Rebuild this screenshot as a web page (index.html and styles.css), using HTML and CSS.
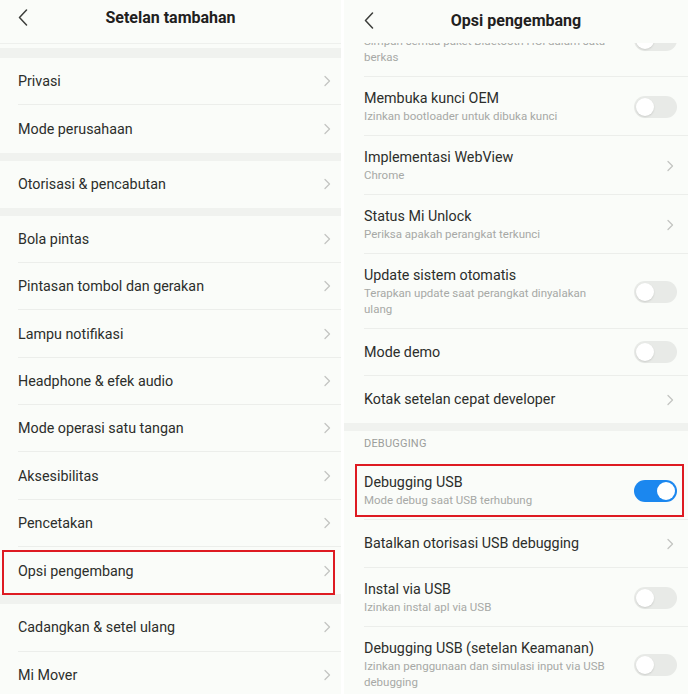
FILE: index.html
```html
<!DOCTYPE html>
<html lang="id">
<head>
<meta charset="utf-8">
<title>Opsi pengembang</title>
<link rel="stylesheet" href="styles.css">
</head>
<body>
<div class="screen">
  <section class="panel panel-left">
    <header class="bar bar-left">
      <svg class="back" viewBox="0 0 10 17" width="10" height="17"><path d="M8.5 1 L1.5 8.5 L8.5 16"/></svg>
      <h1 class="bar-title">Setelan tambahan</h1>
      <span></span>
    </header>
    <div class="band band-top"></div>
    <div class="group">
      <div class="item"><span class="label">Privasi</span><svg class="chev" viewBox="0 0 8 12" width="8" height="12"><path d="M2 1.5 L6.5 6 L2 10.5"/></svg></div>
      <div class="item"><span class="label">Mode perusahaan</span><svg class="chev" viewBox="0 0 8 12" width="8" height="12"><path d="M2 1.5 L6.5 6 L2 10.5"/></svg></div>
    </div>
    <div class="band"></div>
    <div class="group">
      <div class="item"><span class="label">Otorisasi &amp; pencabutan</span><svg class="chev" viewBox="0 0 8 12" width="8" height="12"><path d="M2 1.5 L6.5 6 L2 10.5"/></svg></div>
    </div>
    <div class="band"></div>
    <div class="group">
      <div class="item"><span class="label">Bola pintas</span><svg class="chev" viewBox="0 0 8 12" width="8" height="12"><path d="M2 1.5 L6.5 6 L2 10.5"/></svg></div>
      <div class="item"><span class="label">Pintasan tombol dan gerakan</span><svg class="chev" viewBox="0 0 8 12" width="8" height="12"><path d="M2 1.5 L6.5 6 L2 10.5"/></svg></div>
      <div class="item"><span class="label">Lampu notifikasi</span><svg class="chev" viewBox="0 0 8 12" width="8" height="12"><path d="M2 1.5 L6.5 6 L2 10.5"/></svg></div>
      <div class="item"><span class="label">Headphone &amp; efek audio</span><svg class="chev" viewBox="0 0 8 12" width="8" height="12"><path d="M2 1.5 L6.5 6 L2 10.5"/></svg></div>
      <div class="item"><span class="label">Mode operasi satu tangan</span><svg class="chev" viewBox="0 0 8 12" width="8" height="12"><path d="M2 1.5 L6.5 6 L2 10.5"/></svg></div>
      <div class="item"><span class="label">Aksesibilitas</span><svg class="chev" viewBox="0 0 8 12" width="8" height="12"><path d="M2 1.5 L6.5 6 L2 10.5"/></svg></div>
      <div class="item"><span class="label">Pencetakan</span><svg class="chev" viewBox="0 0 8 12" width="8" height="12"><path d="M2 1.5 L6.5 6 L2 10.5"/></svg></div>
      <div class="item item-marked-left"><span class="label">Opsi pengembang</span><svg class="chev" viewBox="0 0 8 12" width="8" height="12"><path d="M2 1.5 L6.5 6 L2 10.5"/></svg><span class="mark"></span></div>
    </div>
    <div class="band band-wide"></div>
    <div class="group">
      <div class="item"><span class="label">Cadangkan &amp; setel ulang</span><svg class="chev" viewBox="0 0 8 12" width="8" height="12"><path d="M2 1.5 L6.5 6 L2 10.5"/></svg></div>
      <div class="item"><span class="label">Mi Mover</span><svg class="chev" viewBox="0 0 8 12" width="8" height="12"><path d="M2 1.5 L6.5 6 L2 10.5"/></svg></div>
    </div>
  </section>

  <section class="panel panel-right">
    <header class="bar bar-right">
      <svg class="back" viewBox="0 0 10 17" width="10" height="17"><path d="M8.5 1 L1.5 8.5 L8.5 16"/></svg>
      <h1 class="bar-title">Opsi pengembang</h1>
      <span></span>
    </header>
    <div class="scroll">
      <div class="group">
        <div class="row row-partial">
          <div class="text"><div class="title-spacer"></div><div class="sub sub-wrap">Simpan semua paket Bluetooth HCI dalam satu berkas</div></div>
          <span class="toggle"></span>
        </div>
        <div class="row">
          <div class="text"><div class="title">Membuka kunci OEM</div><div class="sub">Izinkan bootloader untuk dibuka kunci</div></div>
          <span class="toggle"></span>
        </div>
        <div class="row">
          <div class="text"><div class="title">Implementasi WebView</div><div class="sub">Chrome</div></div>
          <svg class="chev" viewBox="0 0 8 12" width="8" height="12"><path d="M2 1.5 L6.5 6 L2 10.5"/></svg>
        </div>
        <div class="row">
          <div class="text"><div class="title">Status Mi Unlock</div><div class="sub">Periksa apakah perangkat terkunci</div></div>
          <svg class="chev" viewBox="0 0 8 12" width="8" height="12"><path d="M2 1.5 L6.5 6 L2 10.5"/></svg>
        </div>
        <div class="row">
          <div class="text"><div class="title">Update sistem otomatis</div><div class="sub sub-wrap">Terapkan update saat perangkat dinyalakan ulang</div></div>
          <span class="toggle"></span>
        </div>
        <div class="row row-single">
          <div class="text"><div class="title">Mode demo</div></div>
          <span class="toggle"></span>
        </div>
        <div class="row row-single">
          <div class="text"><div class="title">Kotak setelan cepat developer</div></div>
          <svg class="chev" viewBox="0 0 8 12" width="8" height="12"><path d="M2 1.5 L6.5 6 L2 10.5"/></svg>
        </div>
      </div>
      <div class="band"></div>
      <div class="group">
        <div class="section-label">DEBUGGING</div>
        <div class="row row-marked">
          <div class="text"><div class="title">Debugging USB</div><div class="sub">Mode debug saat USB terhubung</div></div>
          <span class="toggle toggle-on"></span>
          <span class="mark mark-right"></span>
        </div>
        <div class="row row-single row-tall">
          <div class="text"><div class="title">Batalkan otorisasi USB debugging</div></div>
          <svg class="chev" viewBox="0 0 8 12" width="8" height="12"><path d="M2 1.5 L6.5 6 L2 10.5"/></svg>
        </div>
        <div class="row">
          <div class="text"><div class="title">Instal via USB</div><div class="sub">Izinkan instal apl via USB</div></div>
          <span class="toggle"></span>
        </div>
        <div class="row">
          <div class="text"><div class="title">Debugging USB (setelan Keamanan)</div><div class="sub sub-wrap">Izinkan penggunaan dan simulasi input via USB debugging</div></div>
          <span class="toggle"></span>
        </div>
      </div>
    </div>
  </section>
</div>
</body>
</html>
```

FILE: styles.css
```css
* { box-sizing: border-box; }

html, body {
  margin: 0;
  padding: 0;
  background: #ffffff;
}

body {
  font-family: Roboto, "Noto Sans", "Liberation Sans", sans-serif;
  color: #2c2e2b;
}

.screen {
  display: flex;
  gap: 3px;
  width: 688px;
  height: 694px;
  overflow: hidden;
}

.panel {
  background: #fafcf9;
  display: flex;
  flex-direction: column;
  overflow: hidden;
}

.panel-left { width: 341px; flex: none; }
.panel-right { flex: 1; }

/* header bar */
.bar {
  display: grid;
  grid-template-columns: 1fr auto 1fr;
  align-items: center;
  background: #fafcf9;
  flex: none;
}

.bar-left {
  height: 44px;
  padding: 0 18px 8px 18px;
  border-bottom: 1px solid #eef0ed;
}

.bar-right {
  height: 43px;
  padding: 0 20px 3px 20px;
}

.back {
  fill: none;
  stroke: #3c3e3b;
  stroke-width: 1.5;
  stroke-linecap: round;
  stroke-linejoin: round;
}

.bar-title {
  margin: 0;
  font-size: 16px;
  font-weight: 700;
  color: #1f211e;
  white-space: nowrap;
}

/* bands between groups */
.band {
  height: 8px;
  background: #f0f2ef;
  flex: none;
}

.band-wide { height: 10px; }

.band-top {
  height: 14px;
  background: linear-gradient(#fafcf9 0 4px, #f0f2ef 4px);
}

.group { flex: none; }

/* left list items */
.item {
  position: relative;
  height: 47.3px;
  margin-left: 18px;
  padding-right: 10px;
  display: flex;
  align-items: center;
  justify-content: space-between;
  border-bottom: 1px solid #eceeeb;
  font-size: 14.3px;
}

.group:nth-of-type(1) .item:first-child { padding-top: 1px; }

.item:last-child { border-bottom: none; }

.label { color: #2c2e2b; }

.chev {
  fill: none;
  stroke: #c3c5c2;
  stroke-width: 1.3;
  stroke-linecap: round;
  stroke-linejoin: round;
  flex: none;
}

.mark {
  position: absolute;
  border: 2px solid #de1b22;
  pointer-events: none;
}

.item-marked-left .mark {
  left: -16px;
  right: 6px;
  top: 3px;
  bottom: -1px;
}

/* right list */
.scroll {
  flex: 1;
  overflow: hidden;
}

.row {
  position: relative;
  margin-left: 20px;
  padding: 12px 11px 11px 0;
  min-height: 59px;
  display: flex;
  align-items: center;
  justify-content: space-between;
  gap: 16px;
  border-bottom: 1px solid #eceeeb;
}

.group .row:last-child { border-bottom: none; }

.row-partial { margin-top: -41px; }

.row-single {
  min-height: 47px;
  padding-top: 0;
  padding-bottom: 0;
}

.row-tall { min-height: 48px; }

.text { min-width: 0; }

.title {
  font-size: 14.3px;
  line-height: 19px;
  color: #2c2e2b;
}

.title-spacer { height: 19px; }

.sub {
  font-size: 11.5px;
  line-height: 16px;
  color: #a7a9a6;
}

.sub-wrap { max-width: 248px; }

.row .chev { margin-right: 3px; }

.toggle {
  position: relative;
  flex: none;
  width: 43px;
  height: 22px;
  border-radius: 11px;
  background: #e8eae7;
}

.toggle::after {
  content: "";
  position: absolute;
  top: 2px;
  left: 2px;
  width: 18px;
  height: 18px;
  border-radius: 50%;
  background: #ffffff;
  box-shadow: 0 1px 2px rgba(0, 0, 0, 0.12);
}

.toggle-on { background: #1b87ef; }
.toggle-on::after { left: auto; right: 2px; box-shadow: none; }

.section-label {
  margin-left: 20px;
  padding: 6px 0 10px;
  font-size: 11px;
  line-height: 14px;
  color: #9c9e9b;
  letter-spacing: 0.2px;
}

.row-marked .mark-right {
  left: -9px;
  right: 4px;
  top: 3px;
  bottom: 2px;
}
```
